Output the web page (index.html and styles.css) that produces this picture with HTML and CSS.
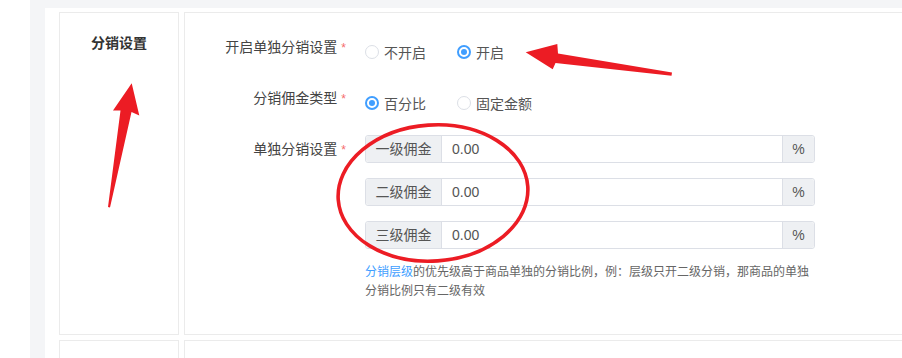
FILE: index.html
```html
<!DOCTYPE html>
<html lang="zh-CN">
<head>
<meta charset="utf-8">
<title>分销设置</title>
<link rel="stylesheet" href="styles.css">
</head>
<body>
<div class="page">
  <div class="gutter"></div>
  <main class="main">
    <div class="card">
      <section class="row">
        <div class="cell-title">分销设置</div>
        <div class="cell-body">
          <div class="form-row">
            <div class="label">开启单独分销设置<span class="req">*</span></div>
            <div class="control radios">
              <label class="radio"><span class="dot"></span>不开启</label>
              <label class="radio"><span class="dot on"></span>开启</label>
            </div>
          </div>
          <div class="form-row">
            <div class="label">分销佣金类型<span class="req">*</span></div>
            <div class="control radios">
              <label class="radio"><span class="dot on"></span>百分比</label>
              <label class="radio"><span class="dot"></span>固定金额</label>
            </div>
          </div>
          <div class="form-row">
            <div class="label">单独分销设置<span class="req">*</span></div>
            <div class="control inputs">
              <div class="group"><span class="pre">一级佣金</span><span class="val">0.00</span><span class="post">%</span></div>
              <div class="group"><span class="pre">二级佣金</span><span class="val">0.00</span><span class="post">%</span></div>
              <div class="group"><span class="pre">三级佣金</span><span class="val">0.00</span><span class="post">%</span></div>
              <p class="help"><span class="link">分销层级</span><span class="help-text">的优先级高于商品单独的分销比例，例：层级只开二级分销，那商品的单独分销比例只有二级有效</span></p>
            </div>
          </div>
        </div>
      </section>
      <section class="row row-next">
        <div class="cell-title"></div>
        <div class="cell-body"></div>
      </section>
    </div>
  </main>
  <svg class="annot" width="902" height="358" viewBox="0 0 902 358" xmlns="http://www.w3.org/2000/svg">
    <polygon fill="#ec1c24" points="131.7,83.3 139.3,115.5 131.5,112 110,207.5 108,207 120.5,110.5 113,110.5"/>
    <polygon fill="#ec1c24" points="525.7,52.3 557.3,44 558,53.5 672,72.5 671.5,75.8 555.5,63 552.7,69.3"/>
    <ellipse cx="433" cy="193" rx="95" ry="68" fill="none" stroke="#ec1c24" stroke-width="3.6" transform="rotate(-4 433 193)"/>
  </svg>
</div>
</body>
</html>
```
FILE: styles.css
```css
* { box-sizing: border-box; }
html, body { margin: 0; padding: 0; }
body {
  font-family: "Liberation Sans", "Noto Sans CJK SC", sans-serif;
  font-size: 14px;
  color: #444;
  background: #fff;
}
.page {
  position: relative;
  display: flex;
  width: 902px;
  height: 358px;
  overflow: hidden;
}
.gutter { width: 30px; flex: none; background: #fff; }
.main {
  flex: 1;
  background: #f4f5f7;
  padding: 8px 0 0 15px;
  overflow: hidden;
}
.card {
  width: 1000px;
  background: #fff;
  padding: 4px 0 0 14px;
}
.row {
  display: flex;
  gap: 5px;
  height: 323px;
}
.row-next { margin-top: 5px; height: 100px; }
.cell-title {
  width: 120px;
  flex: none;
  border: 1px solid #ebebeb;
  padding-top: 20px;
  text-align: center;
  font-weight: bold;
  line-height: 20px;
  color: #333;
}
.cell-body {
  flex: 1;
  border: 1px solid #ebebeb;
  padding-top: 20px;
}
.form-row {
  display: flex;
  margin-bottom: 18px;
}
.label {
  width: 180px;
  flex: none;
  text-align: right;
  padding-right: 19px;
  line-height: 28px;
  height: 28px;
  color: #444;
}
.req {
  color: #f56c6c;
  font-size: 12px;
  margin-left: 4px;
}
.radios {
  display: flex;
  padding-top: 5px;
  height: 33px;
}
.radio {
  display: flex;
  align-items: center;
  height: 28px;
  margin-right: 31px;
  color: #555;
}
.dot {
  width: 14px;
  height: 14px;
  border: 1px solid #dcdfe6;
  border-radius: 50%;
  margin-right: 5px;
  background: #fff;
  position: relative;
}
.dot.on {
  border: 2px solid #409eff;
}
.dot.on::after {
  content: "";
  position: absolute;
  left: 2px;
  top: 2px;
  width: 6px;
  height: 6px;
  border-radius: 50%;
  background: #409eff;
}
.inputs {
  display: flex;
  flex-direction: column;
  gap: 15px;
  width: 450px;
}
.group {
  display: flex;
  height: 28px;
  border: 1px solid #dcdfe6;
  border-radius: 3px;
  line-height: 26px;
  color: #555;
}
.pre {
  width: 76px;
  text-align: center;
  background: #eef0f3;
  border-right: 1px solid #dcdfe6;
  border-radius: 3px 0 0 3px;
}
.val {
  flex: 1;
  padding-left: 10px;
  color: #555;
}
.post {
  width: 32px;
  text-align: center;
  background: #eef0f3;
  border-left: 1px solid #dcdfe6;
  border-radius: 0 3px 3px 0;
}
.help {
  margin: -1px 0 0;
  font-size: 12px;
  line-height: 19px;
  color: #666;
}
.link { color: #409eff; }
.help-text { color: #666; }
.annot {
  position: absolute;
  left: 0;
  top: 0;
  pointer-events: none;
}
```
